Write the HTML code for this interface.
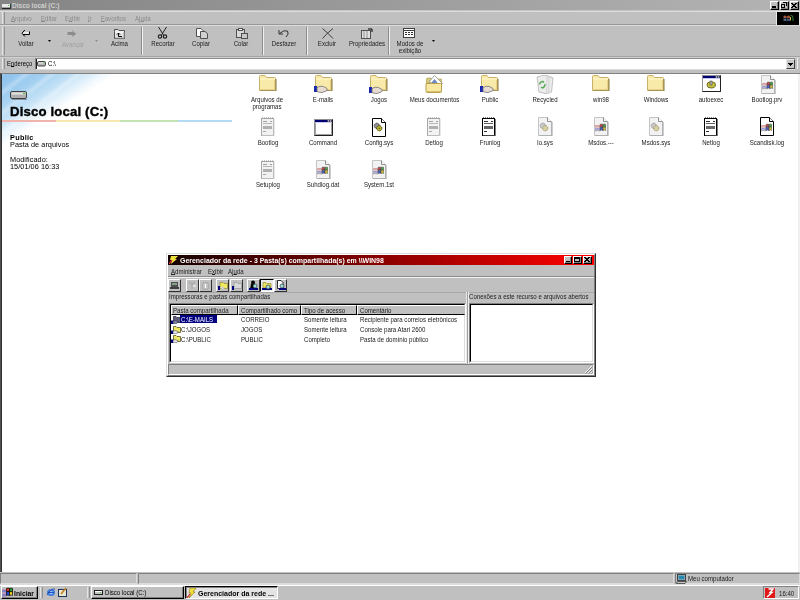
<!DOCTYPE html>
<html><head><meta charset="utf-8">
<style>
*{margin:0;padding:0;box-sizing:border-box}
html,body{width:800px;height:600px;overflow:hidden;background:#c0c0c0;font-family:"Liberation Sans",sans-serif;font-size:7px;color:#000;position:relative}
.a{position:absolute}
.t{position:absolute;white-space:nowrap;line-height:1;transform:scaleX(.87);transform-origin:0 0}
.v{transform:none}
.r{border-top:1px solid #fff;border-left:1px solid #fff;border-right:1px solid #808080;border-bottom:1px solid #808080}
.s{border-top:1px solid #808080;border-left:1px solid #808080;border-right:1px solid #fff;border-bottom:1px solid #fff}
.lbl{position:absolute;width:56px;text-align:center;line-height:7px;font-size:7px;white-space:nowrap;transform:scaleX(.87);color:#202020}
.ic{position:absolute}
.tb{position:absolute;text-align:center;white-space:nowrap;line-height:1;font-size:7px;transform:scaleX(.87);color:#202020}
.sep{position:absolute;width:2px;border-left:1px solid #8c8c8c;border-right:1px solid #f0f0f0}
.grip{position:absolute;width:3px;border-left:1px solid #e4e4e4;border-right:1px solid #909090}
u{text-decoration:underline;text-underline-offset:0px;text-decoration-thickness:1px}
.btn{position:absolute;background:#c0c0c0;border-top:1px solid #fff;border-left:1px solid #fff;border-right:1px solid #000;border-bottom:1px solid #000;box-shadow:inset -1px -1px #808080}
</style></head><body><div style="position:absolute;left:0;top:0;width:800px;height:600px;filter:blur(0.35px)">
<svg width="0" height="0" style="position:absolute">
<defs>
<symbol id="folder" viewBox="0 0 19 16">
<path d="M1.5 3.5 L1.5 1.5 Q1.5 0.5 2.5 0.5 L7 0.5 L8.5 2.5 L16.5 2.5 Q17.5 2.5 17.5 3.5 L17.5 15.5 L1.5 15.5 Z" fill="#f8eaa8" stroke="#c8b068" stroke-width="1"/>
<path d="M2 4 L17 4" stroke="#fff8d0" stroke-width="1"/>
<path d="M2.5 14.5 L16.5 14.5 L16.5 5" stroke="#e8d088" stroke-width="1" fill="none"/>
<path d="M18 4 L18 16 L2 16" stroke="#8a7a40" stroke-width="1" fill="none"/>
</symbol>
<symbol id="hand" viewBox="0 0 19 8">
<rect x="0" y="1" width="3" height="6" fill="#1828b0"/>
<path d="M3 2.5 Q6 0.5 9.5 1.5 L13 3.5 Q14 5.5 12 6 L8 7.5 Q5 7.5 3 6.5 Z" fill="#e8dcd0" stroke="#707070" stroke-width="0.8"/>
</symbol>
<symbol id="doc" viewBox="0 0 16 19">
<path d="M1.5 0.5 L10.5 0.5 L14.5 4.5 L14.5 18.5 L1.5 18.5 Z" fill="#f2f2f2" stroke="#c4c4c4"/>
<path d="M10.5 0.5 L10.5 4.5 L14.5 4.5" fill="#fafafa" stroke="#909090"/>
<path d="M15 5 V19 H2" stroke="#9c9c9c" fill="none"/>
</symbol>
<symbol id="docb" viewBox="0 0 16 19">
<path d="M1.5 0.5 L10.5 0.5 L14.5 4.5 L14.5 18.5 L1.5 18.5 Z" fill="#fff" stroke="#000"/>
<path d="M10.5 0.5 L10.5 4.5 L14.5 4.5" fill="#fff" stroke="#000"/>
</symbol>
<symbol id="log" viewBox="0 0 16 19">
<rect x="1.5" y="1.5" width="12" height="17" fill="#f2f2f2" stroke="#a8a8a8"/>
<path d="M2 1 h12" stroke="#909090" stroke-dasharray="1 1"/>
<rect x="3" y="4" width="4" height="1" fill="#a0a0a0"/>
<rect x="10" y="4" width="2" height="1" fill="#a0a0a0"/>
<rect x="3" y="6" width="9" height="1" fill="#b8b8b8"/>
<rect x="3" y="9" width="9" height="3" fill="#b0b0b0"/>
<rect x="3" y="14" width="3" height="1" fill="#a8a8a8"/>
<path d="M14 2 L14 19 L2 19" stroke="#d0d0d0" fill="none"/>
</symbol>
<symbol id="logd" viewBox="0 0 16 19">
<rect x="1.5" y="1.5" width="12" height="17" fill="#fff" stroke="#000"/>
<path d="M2 1 h12" stroke="#000" stroke-dasharray="1 1"/>
<rect x="3" y="4" width="4" height="1" fill="#303030"/>
<rect x="10" y="4" width="2" height="1" fill="#303030"/>
<rect x="3" y="6" width="9" height="1" fill="#606060"/>
<rect x="3" y="9" width="9" height="3" fill="#686868"/>
<rect x="3" y="14" width="3" height="1" fill="#303030"/>
<path d="M14.5 2 L14.5 19 L2 19" stroke="#808080" fill="none"/>
</symbol>
<symbol id="winflag" viewBox="0 0 10 9">
<path d="M0.5 1.2 Q2.5 0.2 4.5 1.2 L4.5 4.2 Q2.5 3.2 0.5 4.2 Z" fill="#e04030"/>
<path d="M5 1.2 Q7 0.2 9.5 1.2 L9.5 4.2 Q7 3.2 5 4.2 Z" fill="#30a040"/>
<path d="M0.5 4.7 Q2.5 3.7 4.5 4.7 L4.5 7.7 Q2.5 6.7 0.5 7.7 Z" fill="#3060d0"/>
<path d="M5 4.7 Q7 3.7 9.5 4.7 L9.5 7.7 Q7 6.7 5 7.7 Z" fill="#e0c020"/>
</symbol>
<symbol id="flagwave" viewBox="0 0 11 10">
<path d="M0 2.5 Q2.5 1.5 5 2.5 V4 Q2.5 3 0 4 Z" fill="#d09090"/>
<path d="M0 4 Q2.5 3 5 4 V5.5 Q2.5 4.5 0 5.5 Z" fill="#e0c0c0"/>
<path d="M0 5.5 Q2.5 4.5 5 5.5 V7 Q2.5 6 0 7 Z" fill="#9090d8"/>
<path d="M0 7 Q2.5 6 5 7 V8.5 Q2.5 7.5 0 8.5 Z" fill="#b0b0b0"/>
<path d="M5 1.5 Q6.5 0.5 8 1.5 V4.5 Q6.5 3.5 5 4.5 Z" fill="#c05050" stroke="#404040" stroke-width=".5"/>
<path d="M8 1.5 Q9.5 0.5 10.8 1.5 V4.5 Q9.5 3.5 8 4.5 Z" fill="#50a050" stroke="#404040" stroke-width=".5"/>
<path d="M5 4.5 Q6.5 3.5 8 4.5 V7.5 Q6.5 6.5 5 7.5 Z" fill="#5060c0" stroke="#404040" stroke-width=".5"/>
<path d="M8 4.5 Q9.5 3.5 10.8 4.5 V7.5 Q9.5 6.5 8 7.5 Z" fill="#d0c040" stroke="#404040" stroke-width=".5"/>
</symbol>
<symbol id="gear" viewBox="0 0 10 10">
<circle cx="3.8" cy="3.8" r="2.6" fill="#909090" stroke="#303030" stroke-width="1" stroke-dasharray="1.2 .6"/>
<circle cx="6.3" cy="6.3" r="2.6" fill="#c8c030" stroke="#303010" stroke-width="1" stroke-dasharray="1.2 .6"/>
<circle cx="6.3" cy="6.3" r=".9" fill="#606020"/>
</symbol>
<symbol id="geargray" viewBox="0 0 10 10">
<circle cx="3.8" cy="3.8" r="2.6" fill="#c8c8c8" stroke="#909090" stroke-width="1" stroke-dasharray="1.2 .6"/>
<circle cx="6.3" cy="6.3" r="2.6" fill="#d8d0a0" stroke="#a09870" stroke-width="1" stroke-dasharray="1.2 .6"/>
</symbol>
<symbol id="drive" viewBox="0 0 9 5">
<rect x="0.5" y="0.5" width="8" height="4" fill="#c8c8c8" stroke="#202020"/><rect x="1" y="1" width="7" height="1" fill="#fff"/><rect x="6" y="2" width="1" height="1" fill="#40c040"/>
</symbol>
<symbol id="mag" viewBox="0 0 6 6">
<circle cx="2.5" cy="2.5" r="1.8" fill="#a0e0e0" stroke="#202020" stroke-width="0.8"/><path d="M3.8 3.8 L5.8 5.8" stroke="#000080" stroke-width="1.2"/>
</symbol>
</defs>
</svg>

<!-- ===== title bar ===== -->
<div class="a" style="left:0;top:0;width:800px;height:10px;background:linear-gradient(90deg,#848484,#b4b4b4)"></div>
<div class="a" style="left:0;top:10px;width:800px;height:1px;background:#c4c4c4"></div>
<svg class="a" style="left:2px;top:4px" width="9" height="6" viewBox="0 0 9 6" shape-rendering="crispEdges"><rect x="0" y="0" width="8" height="4" fill="#e8e8e8"/><rect x="0" y="3" width="8" height="1" fill="#a0a0a0"/><rect x="6" y="1" width="1" height="1" fill="#40c040"/><rect x="0" y="4" width="9" height="1" fill="#202020"/><rect x="8" y="0" width="1" height="5" fill="#303030"/></svg>
<div class="t" style="left:12px;top:2px;font-size:7.5px;font-weight:bold;color:#d0d0d0">Disco local (C:)</div>
<div class="btn" style="left:770px;top:1px;width:9px;height:9px"><div class="a" style="left:1px;top:4px;width:4px;height:2px;background:#000"></div></div>
<div class="btn" style="left:780px;top:1px;width:9px;height:9px"><svg class="a" style="left:0px;top:0px" width="7" height="7" viewBox="0 0 7 7" shape-rendering="crispEdges"><path d="M2 0h4v1h-4zM5 1h1v3h-1zM0 2h4v1h-4zM0 3h1v3h-1zM3 3h1v3h-1zM0 5h4v1h-4z" fill="#000"/></svg></div>
<div class="btn" style="left:790px;top:1px;width:9px;height:9px"><svg class="a" style="left:0px;top:1px" width="6" height="5" viewBox="0 0 6 5" shape-rendering="crispEdges"><path d="M0 0h2v1h-2zM4 0h2v1h-2zM1 1h4v1h-4zM2 2h2v1h-2zM1 3h4v1h-4zM0 4h2v1h-2zM4 4h2v1h-2z" fill="#000"/></svg></div>

<!-- ===== menu bar ===== -->
<div class="a" style="left:0;top:11px;width:777px;height:1px;background:#dcdcdc"></div>
<div class="grip" style="left:2px;top:12px;height:12px"></div>
<div class="t" style="left:11px;top:15px;color:#8a8a8a"><u>A</u>rquivo</div>
<div class="t" style="left:41px;top:15px;color:#8a8a8a"><u>E</u>ditar</div>
<div class="t" style="left:65px;top:15px;color:#8a8a8a">E<u>x</u>ibir</div>
<div class="t" style="left:88px;top:15px;color:#8a8a8a"><u>I</u>r</div>
<div class="t" style="left:101px;top:15px;color:#8a8a8a"><u>F</u>avoritos</div>
<div class="t" style="left:135px;top:15px;color:#8a8a8a">Aj<u>u</u>da</div>
<div class="a" style="left:0;top:24px;width:800px;height:1px;background:#989898"></div>
<div class="a" style="left:776px;top:11px;width:24px;height:14px;background:#e8e8e8"></div>
<div class="a" style="left:777px;top:12px;width:22px;height:13px;background:#000"></div>
<svg class="a" style="left:783px;top:14px" width="11" height="9" viewBox="0 0 11 9"><path d="M0.5 2 Q2 1.2 3.5 2 V4.3 Q2 3.6 0.5 4.3 Z" fill="#a05848"/><path d="M4 2 Q5.5 1.2 7 2 V4.3 Q5.5 3.6 4 4.3 Z" fill="#985030"/><path d="M0.5 4.8 Q2 4.1 3.5 4.8 V7.2 Q2 6.5 0.5 7.2 Z" fill="#506888"/><path d="M4 4.8 Q5.5 4.1 7 4.8 V7.2 Q5.5 6.5 4 7.2 Z" fill="#405870"/><path d="M7.5 1.5 Q10 1 10 4 V7" stroke="#308030" stroke-width="1" fill="none"/><path d="M7.5 3 V6.5" stroke="#c0b040" stroke-width="1"/></svg>

<!-- ===== toolbar ===== -->
<div class="a" style="left:0;top:25px;width:800px;height:1px;background:#dcdcdc"></div>
<div class="grip" style="left:2px;top:27px;height:28px"></div>
<!-- Voltar -->
<svg class="a" style="left:21px;top:29px" width="10" height="9" viewBox="0 0 10 9"><path d="M1.5 4 L8 4" stroke="#fff" stroke-width="1.4"/><path d="M3.8 1 L1 4.2 L3.8 7.5" stroke="#000" fill="none" stroke-width="1"/><path d="M2 5.5 H8.5 V2.5" stroke="#000" fill="none" stroke-width="1"/></svg>
<div class="tb" style="left:14px;top:40px;width:24px">Voltar</div>
<svg class="a" style="left:48px;top:40px" width="3" height="2"><path d="M0 0 L3 0 L1.5 2 Z" fill="#000"/></svg>
<!-- Avancar -->
<svg class="a" style="left:67px;top:30px" width="10" height="7" viewBox="0 0 10 7"><path d="M5.5 0 L9.5 3.5 L5.5 7 L5.5 5 L0.5 5 L0.5 2 L5.5 2 Z" fill="#8c8c8c"/><path d="M6 1 L9 3.5" stroke="#fff" stroke-width=".6" opacity=".6"/></svg>
<div class="tb" style="left:59px;top:41px;width:28px;color:#a0a0a0">Avançar</div>
<svg class="a" style="left:95px;top:40px" width="3" height="2"><path d="M0 0 L3 0 L1.5 2 Z" fill="#8c8c8c"/></svg>
<!-- Acima -->
<svg class="a" style="left:113px;top:28px" width="13" height="11" viewBox="0 0 13 11"><path d="M1.5 3.5 L1.5 1.5 L5 1.5 L6 2.5 L11.5 2.5 L11.5 10.5 L1.5 10.5 Z" fill="#e4e4e4" stroke="#505050"/><path d="M2 4 L11 4" stroke="#fff"/><path d="M2 10 L11 10 L11 4" stroke="#a0a0a0" fill="none"/><path d="M5.5 5 L5.5 8.5 L9 8.5 M4 6.5 L5.5 5 L7 6.5" stroke="#000" fill="none"/></svg>
<div class="tb" style="left:107px;top:40px;width:25px">Acima</div>
<div class="sep" style="left:141px;top:27px;height:28px"></div>
<!-- Recortar -->
<svg class="a" style="left:157px;top:27px" width="11" height="12" viewBox="0 0 11 12"><path d="M1.5 0 L6.5 8 M9.5 0 L4.5 8" stroke="#202020" stroke-width="1"/><circle cx="3" cy="9.5" r="1.7" fill="none" stroke="#202020" stroke-width="1.2"/><circle cx="8" cy="9.5" r="1.7" fill="none" stroke="#202020" stroke-width="1.2"/></svg>
<div class="tb" style="left:148px;top:40px;width:30px">Recortar</div>
<!-- Copiar -->
<svg class="a" style="left:196px;top:28px" width="13" height="11" viewBox="0 0 13 11"><path d="M0.5 0.5 L5 0.5 L7 2.5 L7 8.5 L0.5 8.5 Z" fill="#fff" stroke="#505050"/><path d="M4.5 3.5 L9 3.5 L11.5 5.5 L11.5 10.5 L4.5 10.5 Z" fill="#d0d0d0" stroke="#505050"/></svg>
<div class="tb" style="left:189px;top:40px;width:24px">Copiar</div>
<!-- Colar -->
<svg class="a" style="left:236px;top:28px" width="12" height="11" viewBox="0 0 12 11"><rect x="0.5" y="1.5" width="8" height="8" fill="#d8d8d8" stroke="#505050"/><rect x="2.5" y="0.5" width="4" height="2" fill="#fff" stroke="#505050"/><rect x="5.5" y="5.5" width="6" height="5" fill="#c8c8c8" stroke="#505050"/></svg>
<div class="tb" style="left:229px;top:40px;width:24px">Colar</div>
<div class="sep" style="left:262px;top:27px;height:28px"></div>
<!-- Desfazer -->
<svg class="a" style="left:278px;top:29px" width="12" height="9" viewBox="0 0 12 9"><path d="M1 1 L1 5 L5 5" stroke="#303030" fill="none"/><path d="M1.5 4.5 Q6 0.5 9.5 2 Q11.5 5 8 8" stroke="#303030" fill="none"/></svg>
<div class="tb" style="left:268px;top:40px;width:32px">Desfazer</div>
<div class="sep" style="left:306px;top:27px;height:28px"></div>
<!-- Excluir -->
<svg class="a" style="left:322px;top:28px" width="12" height="11" viewBox="0 0 12 11"><path d="M0.5 0.5 Q6 5 11 10.5 M11 0.5 Q5 5 0.5 10.5" stroke="#303030" stroke-width="0.9" fill="none"/></svg>
<div class="tb" style="left:314px;top:40px;width:26px">Excluir</div>
<!-- Propriedades -->
<svg class="a" style="left:361px;top:28px" width="12" height="11" viewBox="0 0 12 11"><rect x="0.5" y="2.5" width="9" height="8" fill="#e0e0e0" stroke="#505050"/><path d="M3 3 v7 M6 3 v7" stroke="#909090"/><path d="M7 1 L11 1 L11 4" stroke="#000" fill="none"/></svg>
<div class="tb" style="left:346px;top:40px;width:42px">Propriedades</div>
<div class="sep" style="left:388px;top:27px;height:28px"></div>
<!-- Modos -->
<svg class="a" style="left:403px;top:28px" width="12" height="10" viewBox="0 0 12 10"><rect x="0.5" y="0.5" width="11" height="9" fill="#fff" stroke="#404040"/><path d="M1 2.5 h10" stroke="#404040"/><path d="M2 4.5 h2 M5 4.5 h2 M8 4.5 h2 M2 6.5 h2 M5 6.5 h2 M8 6.5 h2" stroke="#303030"/></svg>
<div class="tb" style="left:393px;top:40px;width:34px">Modos de</div>
<div class="tb" style="left:393px;top:47px;width:34px">exibição</div>
<svg class="a" style="left:432px;top:40px" width="3" height="2"><path d="M0 0 L3 0 L1.5 2 Z" fill="#000"/></svg>
<div class="a" style="left:0;top:56px;width:800px;height:1px;background:#a4a4a4"></div>

<!-- ===== address bar ===== -->
<div class="a" style="left:0;top:57px;width:800px;height:1px;background:#d0d0d0"></div>
<div class="grip" style="left:2px;top:58px;height:11px"></div>
<div class="t" style="left:7px;top:60px;color:#000;transform:scaleX(.84)">E<u>n</u>dereço</div>
<div class="a" style="left:35px;top:58px;width:760px;height:12px;background:#fff;border-top:1px solid #8c8c8c;border-left:1px solid #808080;border-bottom:1px solid #dcdcdc"></div>
<div class="a" style="left:36px;top:59px;width:1px;height:10px;background:#202020"></div>
<svg class="a" style="left:37px;top:61px" width="9" height="6" viewBox="0 0 9 6"><rect x="0.5" y="0.5" width="8" height="4.5" rx="1.2" fill="#b4b4b4" stroke="#303030" stroke-width=".9"/><path d="M1.5 2 H7" stroke="#f0f0f0" stroke-width="1"/><rect x="6" y="1.6" width="1.2" height="1" fill="#70c070"/></svg>
<div class="t" style="left:48px;top:60px;color:#000">C:\</div>
<div class="a" style="left:786px;top:59px;width:9px;height:10px;background:#c8c8c8;border-top:1px solid #e8e8e8;border-left:1px solid #e8e8e8;border-right:1px solid #404040;border-bottom:1px solid #404040"></div><svg class="a" style="left:788px;top:63px" width="5" height="3" shape-rendering="crispEdges"><path d="M0 0h5v1h-5zM1 1h3v1h-3zM2 2h1v1h-1z" fill="#000"/></svg>
<div class="a" style="left:797px;top:58px;width:1px;height:11px;background:#f0f0f0"></div>

<!-- ===== content ===== -->
<div class="a" style="left:0;top:73px;width:800px;height:1px;background:#808080"></div>
<div class="a" style="left:0;top:74px;width:798px;height:498px;background:#fff"></div>
<div class="a" style="left:798px;top:74px;width:2px;height:498px;background:#f0f0f0"></div>
<div class="a" style="left:0;top:73px;width:1px;height:499px;background:#505050"></div>
<div class="a" style="left:1px;top:74px;width:1px;height:498px;background:#303030"></div>
<div class="a" style="left:2px;top:74px;width:110px;height:70px;background:linear-gradient(148deg,#8cc0ec 0%,#a0cef0 18%,#c0e0f6 32%,#e2f1fb 42%,#fff 52%)"></div>
<div class="a" style="left:2px;top:74px;width:110px;height:70px;background:repeating-linear-gradient(-38deg,rgba(255,255,255,0) 0px,rgba(255,255,255,0) 8px,rgba(255,255,255,.28) 12px,rgba(255,255,255,0) 16px)"></div>
<svg class="a" style="left:10px;top:91px" width="18" height="9" viewBox="0 0 18 9"><rect x="0.5" y="0.5" width="16" height="7" rx="1.5" fill="#b0b0b0" stroke="#404040"/><rect x="1.5" y="1.5" width="14" height="2" fill="#e4e4e4"/><rect x="13" y="2" width="2" height="1" fill="#30c030"/><path d="M2 8.5 h15" stroke="#8090a0"/></svg>
<div class="t v" style="left:10px;top:104.6px;font-size:13.2px;font-weight:bold;-webkit-text-stroke:0.4px #000;letter-spacing:.15px">Disco local (C:)</div>
<div class="a" style="left:2px;top:120px;width:54px;height:2px;background:#f0b4ac"></div>
<div class="a" style="left:56px;top:120px;width:64px;height:2px;background:#f8e8b0"></div>
<div class="a" style="left:120px;top:120px;width:58px;height:2px;background:#c4e4b4"></div>
<div class="a" style="left:178px;top:120px;width:54px;height:2px;background:#b4daf6"></div>
<div class="t v" style="left:10px;top:134px;font-weight:bold;font-size:7.3px;letter-spacing:.3px">Public</div>
<div class="t v" style="left:10px;top:141px;font-size:7.3px;letter-spacing:.05px">Pasta de arquivos</div>
<div class="t v" style="left:10px;top:156px;font-size:7.3px;letter-spacing:.05px">Modificado:</div>
<div class="t v" style="left:10px;top:163px;font-size:7.3px;letter-spacing:.05px">15/01/06 16:33</div>

<!-- icons row 1 -->
<svg class="ic" style="left:258px;top:75px" width="19" height="16"><use href="#folder"/></svg>
<div class="lbl" style="left:239px;top:96px">Arquivos de</div>
<div class="lbl" style="left:239px;top:103px">programas</div>

<svg class="ic" style="left:314px;top:75px" width="19" height="16"><use href="#folder"/></svg>
<svg class="ic" style="left:314px;top:85px" width="19" height="8"><use href="#hand"/></svg>
<div class="lbl" style="left:295px;top:96px">E-mails</div>

<svg class="ic" style="left:369px;top:75px" width="19" height="16"><use href="#folder"/></svg>
<svg class="ic" style="left:369px;top:86px" width="19" height="8"><use href="#hand"/></svg>
<div class="lbl" style="left:351px;top:96px">Jogos</div>

<svg class="ic" style="left:425px;top:75px" width="19" height="18" viewBox="0 0 19 18"><path d="M1.5 8 L1.5 4 Q1.5 3 3 3 L6 3 L7 4 L16.5 4 L16.5 9 Z" fill="#d8cc78" stroke="#a09850" stroke-width=".6"/><path d="M4 7 L9.5 0.5 L17.5 8.5 L14 11 Z" fill="#fff" stroke="#8c8c8c" stroke-width=".8"/><path d="M6.5 7.5 L9.5 4 L12.5 7.5 L9.5 9.5 Z" fill="#7088c0"/><path d="M1 8.5 L16.5 8.5 L16.5 16.5 Q16.5 17.5 15.5 17.5 L2 17.5 Q1 17.5 1 16.5 Z" fill="#f8e8a0" stroke="#b8a050"/><path d="M2 16.5 H16" stroke="#d8c070"/></svg>
<div class="lbl" style="left:406px;top:96px;width:56px">Meus documentos</div>

<svg class="ic" style="left:480px;top:75px" width="19" height="16"><use href="#folder"/></svg>
<svg class="ic" style="left:480px;top:85px" width="19" height="8"><use href="#hand"/></svg>
<div class="lbl" style="left:462px;top:96px">Public</div>

<svg class="ic" style="left:536px;top:75px" width="18" height="19" viewBox="0 0 18 19"><path d="M1 2 Q6 0 11 0.5 L17 3 L15.5 17 Q11 19 9 18.5 L3 17 Z" fill="#ececec" stroke="#b4b4b4" stroke-width="0.8"/><path d="M11 0.5 L10.5 18 M17 3 Q14 2 10.8 3" stroke="#c8c8c8" stroke-width=".7" fill="none"/><path d="M13 4 L12.5 17" stroke="#d8d8d8" stroke-width="1.5"/><path d="M3.5 9.5 Q4 6.5 7 6.5 L8 7.5 M9 9 Q9 12 6.5 13 L5 12" stroke="#58a858" stroke-width="1.4" fill="none"/></svg>
<div class="lbl" style="left:517px;top:96px">Recycled</div>

<svg class="ic" style="left:591px;top:75px" width="19" height="16"><use href="#folder"/></svg>
<div class="lbl" style="left:573px;top:96px">win98</div>

<svg class="ic" style="left:646px;top:75px" width="19" height="16"><use href="#folder"/></svg>
<div class="lbl" style="left:628px;top:96px">Windows</div>

<svg class="ic" style="left:702px;top:75px" width="19" height="17" viewBox="0 0 19 17"><rect x="0.5" y="0.5" width="18" height="16" fill="#fff" stroke="#909090"/><path d="M0.5 16.5 H18.5 V0.5" stroke="#202020" fill="none"/><rect x="1" y="1" width="12" height="2" fill="#000070"/><rect x="13" y="1" width="5" height="2" fill="#404060"/><rect x="14" y="1.5" width="1" height="1" fill="#fff"/><rect x="16" y="1.5" width="1" height="1" fill="#fff"/><rect x="1" y="3" width="17" height="1" fill="#c8c8f0"/><path d="M5 10 Q5 7 8 7 L10.5 7 Q13.5 7 13.5 10 Q13.5 13 9 13 Q5 13 5 10 Z" fill="#c8c040" stroke="#505010" stroke-width=".8"/><rect x="8" y="6" width="2" height="4" fill="#c0c0c0" stroke="#303030" stroke-width=".5"/></svg>
<div class="lbl" style="left:683px;top:96px">autoexec</div>

<svg class="ic" style="left:760px;top:75px" width="16" height="19"><use href="#doc"/></svg>
<svg class="ic" style="left:762px;top:81px" width="11" height="10"><use href="#flagwave"/></svg>
<div class="lbl" style="left:739px;top:96px">Bootlog.prv</div>

<!-- row 2 -->
<svg class="ic" style="left:260px;top:117px" width="16" height="19"><use href="#log"/></svg>
<div class="lbl" style="left:240px;top:139px">Bootlog</div>

<svg class="ic" style="left:314px;top:119px" width="19" height="17" viewBox="0 0 19 17"><rect x="0.5" y="0.5" width="18" height="16" fill="#fff" stroke="#909090"/><path d="M0.5 16.5 H18.5 V0.5" stroke="#202020" fill="none"/><rect x="1" y="1" width="12" height="2" fill="#000070"/><rect x="13" y="1" width="5" height="2" fill="#404060"/><rect x="14" y="1.5" width="1" height="1" fill="#fff"/><rect x="16" y="1.5" width="1" height="1" fill="#fff"/><rect x="1" y="3" width="17" height="1" fill="#c8c8f0"/><path d="M1.5 4 V15.5 H17.5 V4" stroke="#a0a0a0" fill="none"/></svg>
<div class="lbl" style="left:295px;top:139px">Command</div>

<svg class="ic" style="left:371px;top:118px" width="16" height="19"><use href="#docb"/></svg>
<svg class="ic" style="left:373px;top:122px" width="10" height="10"><use href="#gear"/></svg>
<div class="lbl" style="left:351px;top:139px">Config.sys</div>

<svg class="ic" style="left:426px;top:117px" width="16" height="19"><use href="#log"/></svg>
<div class="lbl" style="left:406px;top:139px">Detlog</div>

<svg class="ic" style="left:481px;top:117px" width="16" height="19"><use href="#logd"/></svg>
<div class="lbl" style="left:462px;top:139px">Frunlog</div>

<svg class="ic" style="left:537px;top:117px" width="16" height="19"><use href="#doc"/></svg>
<svg class="ic" style="left:539px;top:122px" width="10" height="10"><use href="#geargray"/></svg>
<div class="lbl" style="left:517px;top:139px">Io.sys</div>

<svg class="ic" style="left:593px;top:117px" width="16" height="19"><use href="#doc"/></svg>
<svg class="ic" style="left:595px;top:123px" width="11" height="10"><use href="#flagwave"/></svg>
<div class="lbl" style="left:573px;top:139px">Msdos.---</div>

<svg class="ic" style="left:648px;top:117px" width="16" height="19"><use href="#doc"/></svg>
<svg class="ic" style="left:650px;top:122px" width="10" height="10"><use href="#geargray"/></svg>
<div class="lbl" style="left:628px;top:139px">Msdos.sys</div>

<svg class="ic" style="left:703px;top:117px" width="16" height="19"><use href="#logd"/></svg>
<div class="lbl" style="left:683px;top:139px">Netlog</div>

<svg class="ic" style="left:759px;top:117px" width="16" height="19"><use href="#docb"/></svg>
<svg class="ic" style="left:761px;top:123px" width="11" height="10"><use href="#flagwave"/></svg>
<div class="lbl" style="left:739px;top:139px">Scandisk.log</div>

<!-- row 3 -->
<svg class="ic" style="left:260px;top:160px" width="16" height="19"><use href="#log"/></svg>
<div class="lbl" style="left:240px;top:181px">Setuplog</div>

<svg class="ic" style="left:315px;top:160px" width="16" height="19"><use href="#doc"/></svg>
<svg class="ic" style="left:317px;top:166px" width="11" height="10"><use href="#flagwave"/></svg>
<div class="lbl" style="left:295px;top:181px">Suhdlog.dat</div>

<svg class="ic" style="left:371px;top:160px" width="16" height="19"><use href="#doc"/></svg>
<svg class="ic" style="left:373px;top:166px" width="11" height="10"><use href="#flagwave"/></svg>
<div class="lbl" style="left:351px;top:181px">System.1st</div>

<!-- ===== status bar ===== -->
<div class="a s" style="left:0;top:573px;width:137px;height:11px;border-right-color:#dcdcdc;border-bottom-color:#dcdcdc"></div>
<div class="a s" style="left:138px;top:573px;width:536px;height:11px;border-right-color:#dcdcdc;border-bottom-color:#dcdcdc"></div>
<div class="a s" style="left:675px;top:573px;width:125px;height:11px;border-right-color:#dcdcdc;border-bottom-color:#dcdcdc"></div>
<svg class="a" style="left:676px;top:574px" width="11" height="10" viewBox="0 0 11 10"><rect x="1.5" y="0.5" width="8" height="6" fill="#c0c0c0" stroke="#404040"/><rect x="2.5" y="1.5" width="6" height="4" fill="#2888b0"/><path d="M0.5 8.5 L2 7.5 L10.5 7.5 L9 9.5 L0.5 9.5 Z" fill="#c0c0c0" stroke="#404040" stroke-width=".8"/></svg>
<div class="t" style="left:688px;top:575px;color:#202020">Meu computador</div>

<!-- ===== taskbar ===== -->
<div class="a" style="left:0;top:584px;width:800px;height:1px;background:#dcdcdc"></div>
<div class="a" style="left:0;top:585px;width:800px;height:1px;background:#fff"></div>
<div class="btn" style="left:1px;top:586px;width:37px;height:13px"></div>
<svg class="a" style="left:2px;top:587px" width="11" height="11" viewBox="0 0 11 11"><path d="M0 3 H4 M0 5 H4 M0 7 H4 M0 9 H4" stroke="#b070b0" stroke-width="1"/><path d="M0 4 H4 M0 8 H4" stroke="#5070d0" stroke-width="1"/><path d="M4.5 1.5 Q6 0.5 7.5 1.5 V5 Q6 4 4.5 5 Z" fill="#e03020" stroke="#000" stroke-width=".7"/><path d="M7.5 1.5 Q9 0.5 10.5 1.5 V5 Q9 4 7.5 5 Z" fill="#20a030" stroke="#000" stroke-width=".7"/><path d="M4.5 5 Q6 4 7.5 5 V8.5 Q6 7.5 4.5 8.5 Z" fill="#2050e0" stroke="#000" stroke-width=".7"/><path d="M7.5 5 Q9 4 10.5 5 V8.5 Q9 7.5 7.5 8.5 Z" fill="#f0d020" stroke="#000" stroke-width=".7"/></svg>
<div class="t" style="left:14px;top:590px;font-weight:bold;font-size:7.8px">Iniciar</div>
<div class="grip" style="left:40px;top:587px;height:11px"></div>
<svg class="a" style="left:46px;top:587px" width="10" height="10" viewBox="0 0 10 10"><ellipse cx="5" cy="5.5" rx="4" ry="3.5" fill="#4080e0"/><ellipse cx="5" cy="5.5" rx="2" ry="1.5" fill="#c0d8f8"/><path d="M2 5.5 h6" stroke="#2050c0" stroke-width="1.2"/><path d="M1 8 Q5 1 9 2" stroke="#2040a0" stroke-width="0.8" fill="none"/></svg>
<svg class="a" style="left:58px;top:587px" width="10" height="10" viewBox="0 0 10 10"><rect x="0.5" y="2.5" width="8" height="7" fill="#e8e8d0" stroke="#203060"/><path d="M3 7 L8 1" stroke="#c08020" stroke-width="1.6"/></svg>
<div class="grip" style="left:87px;top:587px;height:11px"></div>
<div class="btn" style="left:91px;top:586px;width:93px;height:13px"></div>
<svg class="a" style="left:94px;top:590px" width="9" height="5" viewBox="0 0 9 5"><use href="#drive"/></svg>
<div class="t" style="left:105px;top:589px;color:#000">Disco local (C:)</div>
<div class="a" style="left:185px;top:586px;width:93px;height:13px;background:#e4e4e4;border-top:1px solid #000;border-left:1px solid #000;border-right:1px solid #fff;border-bottom:1px solid #fff;box-shadow:inset 1px 1px #808080"></div>
<svg class="a" style="left:187px;top:588px" width="10" height="10" viewBox="0 0 10 10"><path d="M3 0 L9 0 L6 4 L8 4 L2 10 L4 5 L2 5 Z" fill="#f0e040" stroke="#806000" stroke-width="0.5"/><path d="M0 10 L3 6" stroke="#c02020" stroke-width="1.2"/></svg>
<div class="t v" style="left:198px;top:590px;font-weight:bold">Gerenciador da rede ...</div>
<div class="a s" style="left:763px;top:586px;width:36px;height:13px"></div>
<svg class="a" style="left:765px;top:588px" width="10" height="10" viewBox="0 0 10 10"><rect x="0" y="0" width="10" height="10" fill="#e01818"/><path d="M3.5 1 L8 1 L5 4.5 L7 4.5 L2 9" stroke="#fff" stroke-width="1.4" fill="none"/></svg>
<div class="t" style="left:779px;top:590px;color:#202020">16:40</div>

<!-- ===== Dialog ===== -->
<div class="a" style="left:166px;top:253px;width:430px;height:124px;background:#c0c0c0;border-top:1px solid #dcdcdc;border-left:1px solid #dcdcdc;border-right:1px solid #303030;border-bottom:1px solid #303030"></div>
<div class="a" style="left:167px;top:254px;width:428px;height:122px;border-top:1px solid #fff;border-left:1px solid #fff;border-right:1px solid #808080;border-bottom:1px solid #808080"></div>
<div class="a" style="left:168px;top:255px;width:426px;height:10px;background:linear-gradient(90deg,#140000 0%,#ff0000 100%)"></div>
<svg class="a" style="left:169px;top:256px" width="9" height="8" viewBox="0 0 9 8"><path d="M2 0 L9 0 L6 3 L8 3 L2 8 L3 4 L1 4 Z" fill="#f0e040"/><path d="M0 8 L3 4" stroke="#e03030" stroke-width="1.2"/></svg>
<div class="t" style="left:180px;top:257px;color:#fff;font-weight:bold;font-size:8px">Gerenciador da rede - 3 Pasta(s) compartilhada(s) em \\WIN98</div>
<div class="btn" style="left:564px;top:256px;width:8px;height:8px"><div class="a" style="left:1px;top:4px;width:4px;height:1px;background:#000"></div></div>
<div class="btn" style="left:573px;top:256px;width:9px;height:8px"><div class="a" style="left:0px;top:0px;width:6px;height:5px;border:1px solid #000;border-top-width:2px"></div></div>
<div class="btn" style="left:583px;top:256px;width:9px;height:8px"><svg class="a" style="left:0px;top:0px" width="6" height="5" viewBox="0 0 6 5" shape-rendering="crispEdges"><path d="M0 0h2v1h-2zM4 0h2v1h-2zM1 1h4v1h-4zM2 2h2v1h-2zM1 3h4v1h-4zM0 4h2v1h-2zM4 4h2v1h-2z" fill="#000"/></svg></div>
<div class="t" style="left:171px;top:268px;color:#202020"><u>A</u>dministrar</div>
<div class="t" style="left:208px;top:268px;color:#202020">E<u>x</u>ibir</div>
<div class="t" style="left:228px;top:268px;color:#202020">Aj<u>u</u>da</div>
<div class="a" style="left:168px;top:276px;width:426px;height:1px;background:#8c8c8c"></div>
<div class="a" style="left:168px;top:277px;width:426px;height:1px;background:#f4f4f4"></div>
<!-- dialog toolbar buttons -->
<div class="a r" style="left:168px;top:279px;width:13px;height:13px;border-right-color:#303030;border-bottom-color:#303030"></div>
<svg class="a" style="left:170px;top:282px" width="9" height="7" viewBox="0 0 9 7"><rect x="1" y="0" width="7" height="5" fill="#505050"/><rect x="2" y="1" width="5" height="2" fill="#80a080"/><rect x="0" y="5" width="9" height="2" fill="#404040"/></svg>
<div class="a r" style="left:186px;top:279px;width:13px;height:13px;border-right-color:#303030;border-bottom-color:#303030"></div>
<svg class="a" style="left:188px;top:281px" width="9" height="9" viewBox="0 0 9 9"><path d="M1 1 L4 3 L7 1 M4 3 V8" stroke="#a8a8a8" stroke-width="1.2" fill="none"/><path d="M5 5 h3" stroke="#fff"/></svg>
<div class="a r" style="left:199px;top:279px;width:13px;height:13px;border-right-color:#303030;border-bottom-color:#303030"></div>
<svg class="a" style="left:201px;top:281px" width="9" height="9" viewBox="0 0 9 9"><rect x="1.5" y="1.5" width="6" height="7" rx="2" fill="none" stroke="#a8a8a8"/><path d="M4.5 3 V7" stroke="#fff" stroke-width="1.2"/></svg>
<div class="a r" style="left:216px;top:279px;width:13px;height:13px;border-right-color:#303030;border-bottom-color:#303030"></div>
<svg class="a" style="left:218px;top:281px" width="10" height="9" viewBox="0 0 10 9"><path d="M2 1.5 L5 1.5 L6 2.5 L9.5 2.5 L9.5 7.5 L2 7.5 Z" fill="#f0e860" stroke="#807820" stroke-width=".6"/><rect x="0" y="5" width="2" height="4" fill="#000080"/><path d="M2 6 Q5 5 7 7 L4 8.5 Z" fill="#d0d0d0"/></svg>
<div class="a r" style="left:230px;top:279px;width:13px;height:13px;border-right-color:#303030;border-bottom-color:#303030"></div>
<svg class="a" style="left:232px;top:281px" width="10" height="9" viewBox="0 0 10 9"><path d="M2 1.5 L5 1.5 L6 2.5 L9.5 2.5 L9.5 7.5 L2 7.5 Z" fill="#d8d8d8" stroke="#909090" stroke-width=".6"/><rect x="0" y="5" width="2" height="4" fill="#000080"/></svg>
<div class="a r" style="left:247px;top:279px;width:13px;height:13px;border-right-color:#303030;border-bottom-color:#303030"></div>
<svg class="a" style="left:249px;top:280px" width="10" height="10" viewBox="0 0 10 10"><circle cx="4" cy="2.5" r="2" fill="#000"/><path d="M1 9 L2 4 L6 4 L6 9 Z" fill="#000"/><rect x="0" y="8" width="9" height="2" fill="#000080"/><circle cx="6" cy="6" r="2" fill="#a0e0e0" stroke="#202020" stroke-width=".6"/></svg>
<div class="a" style="left:260px;top:279px;width:14px;height:13px;background:#e8e8e8;border-top:1px solid #000;border-left:1px solid #000;border-right:1px solid #fff;border-bottom:1px solid #fff"></div>
<svg class="a" style="left:262px;top:281px" width="10" height="10" viewBox="0 0 10 10"><path d="M1 1.5 L4 1.5 L5 2.5 L9 2.5 L9 7 L1 7 Z" fill="#e8e060" stroke="#807820" stroke-width=".6"/><rect x="0" y="7" width="10" height="2" fill="#000080"/><circle cx="6" cy="6" r="2" fill="#a0e0e0" stroke="#202020" stroke-width=".6"/></svg>
<div class="a r" style="left:274px;top:279px;width:13px;height:13px;border-right-color:#303030;border-bottom-color:#303030"></div>
<svg class="a" style="left:276px;top:280px" width="10" height="10" viewBox="0 0 10 10"><path d="M1.5 0.5 L5 0.5 L7 2.5 L7 8.5 L1.5 8.5 Z" fill="#fff" stroke="#000" stroke-width=".8"/><rect x="3" y="8" width="7" height="2" fill="#000080"/><circle cx="6" cy="6" r="2" fill="#a0e0e0" stroke="#202020" stroke-width=".6"/></svg>
<div class="t" style="left:169px;top:293px;color:#202020">Impressoras e pastas compartilhadas</div>
<div class="t" style="left:469px;top:293px;color:#202020">Conexões a este recurso e arquivos abertos</div>
<div class="a" style="left:168px;top:292px;width:298px;height:1px;background:#a8a8a8"></div>
<div class="a" style="left:469px;top:292px;width:125px;height:1px;background:#a8a8a8"></div>
<div class="a" style="left:466px;top:292px;width:1px;height:72px;background:#e8e8e8"></div>
<div class="a" style="left:467px;top:292px;width:1px;height:72px;background:#a0a0a0"></div>
<div class="a" style="left:468px;top:292px;width:1px;height:72px;background:#f0f0f0"></div>
<!-- left list -->
<div class="a" style="left:169px;top:303px;width:297px;height:60px;background:#fff;border-top:1px solid #808080;border-left:1px solid #808080;border-right:1px solid #fff;border-bottom:1px solid #fff"></div>
<div class="a" style="left:170px;top:304px;width:295px;height:58px;border-top:1px solid #000;border-left:1px solid #000;border-right:1px solid #dcdcdc;border-bottom:1px solid #dcdcdc"></div>
<div class="a" style="left:171px;top:305px;width:294px;height:10px;background:#c0c0c0"></div>
<div class="a r" style="left:171px;top:305px;width:67px;height:10px;border-right-color:#000;border-bottom-color:#000"></div>
<div class="a r" style="left:238px;top:305px;width:63px;height:10px;border-right-color:#000;border-bottom-color:#000"></div>
<div class="a r" style="left:301px;top:305px;width:56px;height:10px;border-right-color:#000;border-bottom-color:#000"></div>
<div class="a r" style="left:357px;top:305px;width:108px;height:10px;border-right-color:#c0c0c0;border-bottom-color:#000"></div>
<div class="t" style="left:173px;top:307px;color:#202020">Pasta compartilhada</div>
<div class="t" style="left:241px;top:307px;color:#202020">Compartilhado como</div>
<div class="t" style="left:304px;top:307px;color:#202020">Tipo de acesso</div>
<div class="t" style="left:360px;top:307px;color:#202020">Comentário</div>
<svg class="a" style="left:171px;top:315px" width="10" height="9" viewBox="0 0 10 9"><path d="M2.5 1.5 H5 L6 2.5 H9.5 V7.5 H2.5 Z" fill="#606078" stroke="#202040" stroke-width=".7"/><rect x="0" y="5.5" width="2.5" height="3.5" fill="#000080"/><path d="M2 6 Q5 4.8 7.5 7 L5 8.8 L2 8.8 Z" fill="#8080a0" stroke="#202040" stroke-width=".5"/></svg>
<div class="a" style="left:180px;top:315px;width:37px;height:8px;background:#000080"></div>
<div class="t" style="left:181px;top:316px;color:#fff">C:\E-MAILS</div>
<div class="t" style="left:241px;top:316px;color:#202020">CORREIO</div>
<div class="t" style="left:304px;top:316px;color:#202020">Somente leitura</div>
<div class="t" style="left:360px;top:316px;color:#202020">Recipiente para correios eletrônicos</div>
<svg class="a" style="left:171px;top:325px" width="10" height="9" viewBox="0 0 10 9"><path d="M2.5 1.5 H5 L6 2.5 H9.5 V7.5 H2.5 Z" fill="#f0e860" stroke="#404010" stroke-width=".7"/><rect x="0" y="5.5" width="2.5" height="3.5" fill="#000080"/><path d="M2 6 Q5 4.8 7.5 7 L5 8.8 L2 8.8 Z" fill="#e8e8e8" stroke="#303030" stroke-width=".5"/></svg>
<div class="t" style="left:181px;top:326px;color:#202020">C:\JOGOS</div>
<div class="t" style="left:241px;top:326px;color:#202020">JOGOS</div>
<div class="t" style="left:304px;top:326px;color:#202020">Somente leitura</div>
<div class="t" style="left:360px;top:326px;color:#202020">Console para Atari 2600</div>
<svg class="a" style="left:171px;top:334px" width="10" height="9" viewBox="0 0 10 9"><path d="M2.5 1.5 H5 L6 2.5 H9.5 V7.5 H2.5 Z" fill="#f0e860" stroke="#404010" stroke-width=".7"/><rect x="0" y="5.5" width="2.5" height="3.5" fill="#000080"/><path d="M2 6 Q5 4.8 7.5 7 L5 8.8 L2 8.8 Z" fill="#e8e8e8" stroke="#303030" stroke-width=".5"/></svg>
<div class="t" style="left:181px;top:336px;color:#202020">C:\PUBLIC</div>
<div class="t" style="left:241px;top:336px;color:#202020">PUBLIC</div>
<div class="t" style="left:304px;top:336px;color:#202020">Completo</div>
<div class="t" style="left:360px;top:336px;color:#202020">Pasta de domínio público</div>
<!-- right list -->
<div class="a" style="left:469px;top:303px;width:125px;height:60px;background:#fff;border-top:1px solid #808080;border-left:1px solid #808080;border-right:1px solid #fff;border-bottom:1px solid #fff"></div>
<div class="a" style="left:470px;top:304px;width:123px;height:58px;border-top:1px solid #000;border-left:1px solid #000;border-right:1px solid #dcdcdc;border-bottom:1px solid #dcdcdc"></div>
<!-- status -->
<div class="a s" style="left:168px;top:364px;width:426px;height:11px"></div>
<svg class="a" style="left:584px;top:365px" width="9" height="9" viewBox="0 0 9 9"><path d="M8 1 L1 8 M8 4 L4 8 M8 7 L7 8" stroke="#fff"/><path d="M8.5 1.5 L1.5 8.5 M8.5 4.5 L4.5 8.5 M8.5 7.5 L7.5 8.5" stroke="#808080"/></svg>
</div></body></html>
